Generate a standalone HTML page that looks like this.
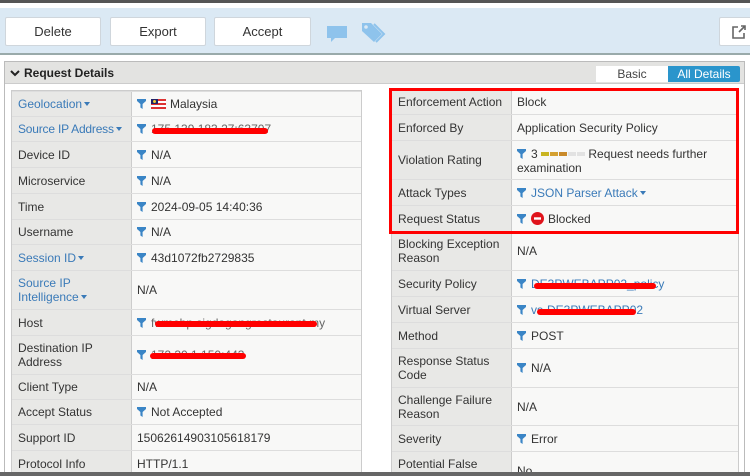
<!DOCTYPE html>
<html><head><style>
*{box-sizing:border-box;margin:0;padding:0}
html,body{width:750px;height:476px;overflow:hidden}
body{background:#fff;font-family:"Liberation Sans",sans-serif;font-size:12px;color:#333;position:relative}
.abs{position:absolute}
.btn{position:absolute;top:17px;height:29px;background:#fff;border:1px solid #cfd6dc;border-radius:2px;font-size:13px;color:#333;text-align:center;line-height:27px}
.r{position:absolute;border-bottom:1px solid #ddd;display:flex}
.l{background:#e8e8e6;border-right:1px solid #ccc;padding:0 6px;display:flex;align-items:center;line-height:14px;width:120px;white-space:nowrap}
.v{background:#f8f8f7;padding:0 5px;display:flex;align-items:center;line-height:14px;flex:1}
.lk{color:#3a7ab8}
.f{display:inline-block;width:9px;height:10px;margin-right:5px;vertical-align:-1px}
.red{position:absolute;height:6px;background:#f00;border-radius:3px}
.car{display:inline-block;width:0;height:0;border-left:3.5px solid transparent;border-right:3.5px solid transparent;border-top:4px solid #3a7ab8;margin-left:2px;vertical-align:2px}
</style></head><body>
<svg width="0" height="0" style="position:absolute"><defs><symbol id="fn" viewBox="0 0 9 10"><path d="M0 0H9V2L5.6 5V10L3.4 8.5V5L0 2Z" fill="#3a85c6"/></symbol></defs></svg>
<div class="abs" style="left:0;top:0;width:750px;height:3px;background:#555"></div>
<div class="abs" style="left:0;top:8px;width:750px;height:47px;background:#dbe9f4;border-bottom:2px solid #9aa"></div>
<div class="btn" style="left:5px;width:96px">Delete</div>
<div class="btn" style="left:110px;width:96px">Export</div>
<div class="btn" style="left:214px;width:97px">Accept</div>
<svg class="abs" style="left:326px;top:25px" width="22" height="18"><path d="M1 1H21V13H9L5 17V13H1Z" fill="#8ec3ec"/></svg>
<svg class="abs" style="left:360px;top:21px" width="26" height="22"><path d="M2 2H11L22 13L14 21L2 10Z" fill="#8ec3ec"/><circle cx="6" cy="6" r="1.8" fill="#dbe9f4"/><path d="M14 3L24 13L16 21" stroke="#8ec3ec" stroke-width="2" fill="none"/></svg>
<div class="btn" style="left:719px;top:17px;width:40px"></div>
<svg class="abs" style="left:731px;top:24px" width="16" height="16"><path d="M7 3H2V14H13V9" stroke="#666" stroke-width="1.6" fill="none"/><path d="M8 8L14 2M10 2H14V6" stroke="#666" stroke-width="1.6" fill="none"/></svg>
<div class="abs" style="left:4px;top:61px;width:741px;height:415px;border:1px solid #bbb;border-bottom:none;background:#fff"></div>
<div class="abs" style="left:5px;top:62px;width:739px;height:22px;background:#e3e3e1;border-bottom:1px solid #ccc"></div>
<svg class="abs" style="left:10px;top:70px" width="10" height="7"><path d="M1 1L5 5L9 1" stroke="#222" stroke-width="2" fill="none"/></svg>
<div class="abs" style="left:24px;top:66px;font-weight:bold;font-size:12px;color:#222">Request Details</div>
<div class="abs" style="left:596px;top:66px;width:72px;height:16px;background:#fff;text-align:center;line-height:16px;color:#444">Basic</div>
<div class="abs" style="left:668px;top:66px;width:72px;height:16px;background:#2a95cc;text-align:center;line-height:16px;color:#fff;border-radius:0 2px 2px 0">All Details</div>

<div class="abs" style="left:11px;top:90px;width:351px;height:386px;border:1px solid #ccc;background:#ddd"></div>
<div class="abs" style="left:391px;top:88px;width:348px;height:388px;border:1px solid #ccc;background:#ddd"></div>

<div class="r" style="left:12px;top:92px;width:349px;height:25px"><div class="l lk">Geolocation<span class="car"></span></div><div class="v"><svg class="f"><use href="#fn"/></svg><svg width="15" height="10" style="margin-right:4px"><rect width="15" height="10" fill="#d33"/><rect y="2" width="15" height="2" fill="#fff"/><rect y="6" width="15" height="2" fill="#fff"/><rect width="7" height="5" fill="#226"/><circle cx="3.5" cy="2.5" r="1.5" fill="#ec3"/></svg>Malaysia</div></div>
<div class="r" style="left:12px;top:117px;width:349px;height:25px"><div class="l lk" style="letter-spacing:-0.2px">Source IP Address<span class="car"></span></div><div class="v"><svg class="f"><use href="#fn"/></svg><span style="color:#666">175.139.183.27:63707</span></div></div>
<div class="red" style="left:152px;top:128px;width:116px"></div>
<div class="r" style="left:12px;top:142px;width:349px;height:26px"><div class="l">Device ID</div><div class="v"><svg class="f"><use href="#fn"/></svg>N/A</div></div>
<div class="r" style="left:12px;top:168px;width:349px;height:26px"><div class="l">Microservice</div><div class="v"><svg class="f"><use href="#fn"/></svg>N/A</div></div>
<div class="r" style="left:12px;top:194px;width:349px;height:26px"><div class="l">Time</div><div class="v"><svg class="f"><use href="#fn"/></svg>2024-09-05 14:40:36</div></div>
<div class="r" style="left:12px;top:220px;width:349px;height:25px"><div class="l">Username</div><div class="v"><svg class="f"><use href="#fn"/></svg>N/A</div></div>
<div class="r" style="left:12px;top:245px;width:349px;height:26px"><div class="l lk">Session ID<span class="car"></span></div><div class="v"><svg class="f"><use href="#fn"/></svg>43d1072fb2729835</div></div>
<div class="r" style="left:12px;top:271px;width:349px;height:39px"><div class="l lk" style="display:block;padding-top:5px">Source IP<br>Intelligence<span class="car"></span></div><div class="v">N/A</div></div>
<div class="r" style="left:12px;top:310px;width:349px;height:26px"><div class="l">Host</div><div class="v"><svg class="f"><use href="#fn"/></svg><span style="color:#666">fwmobp.sigdagangrestaurant.my</span></div></div>
<div class="red" style="left:155px;top:321px;width:162px"></div>
<div class="r" style="left:12px;top:336px;width:349px;height:39px"><div class="l" style="display:block;padding-top:5px">Destination IP<br>Address</div><div class="v"><svg class="f"><use href="#fn"/></svg><span style="color:#666">172.30.1.150:443</span></div></div>
<div class="red" style="left:150px;top:353px;width:96px"></div>
<div class="r" style="left:12px;top:375px;width:349px;height:25px"><div class="l">Client Type</div><div class="v">N/A</div></div>
<div class="r" style="left:12px;top:400px;width:349px;height:25px"><div class="l">Accept Status</div><div class="v"><svg class="f"><use href="#fn"/></svg>Not Accepted</div></div>
<div class="r" style="left:12px;top:425px;width:349px;height:26px"><div class="l">Support ID</div><div class="v">15062614903105618179</div></div>
<div class="r" style="left:12px;top:451px;width:349px;height:26px"><div class="l">Protocol Info</div><div class="v">HTTP/1.1</div></div>

<div class="r" style="left:392px;top:90px;width:346px;height:25px"><div class="l">Enforcement Action</div><div class="v">Block</div></div>
<div class="r" style="left:392px;top:115px;width:346px;height:26px"><div class="l">Enforced By</div><div class="v">Application Security Policy</div></div>
<div class="r" style="left:392px;top:141px;width:346px;height:39px"><div class="l">Violation Rating</div><div class="v" style="display:block;padding-top:6px"><svg class="f"><use href="#fn"/></svg>3 <span style="display:inline-block;width:8px;height:4px;background:#c9b522;vertical-align:2px"></span><span style="display:inline-block;width:8px;height:4px;background:#d4a030;margin-left:1px;vertical-align:2px"></span><span style="display:inline-block;width:8px;height:4px;background:#c98a2a;margin-left:1px;vertical-align:2px"></span><span style="display:inline-block;width:8px;height:4px;background:#e2e2e2;margin-left:1px;vertical-align:2px"></span><span style="display:inline-block;width:8px;height:4px;background:#e2e2e2;margin-left:1px;vertical-align:2px"></span> Request needs further<br>examination</div></div>
<div class="r" style="left:392px;top:180px;width:346px;height:26px"><div class="l">Attack Types</div><div class="v lk"><svg class="f"><use href="#fn"/></svg>JSON Parser Attack<span class="car"></span></div></div>
<div class="r" style="left:392px;top:206px;width:346px;height:26px"><div class="l">Request Status</div><div class="v"><svg class="f"><use href="#fn"/></svg><svg width="13" height="13" style="margin-right:4px"><circle cx="6.5" cy="6.5" r="6.5" fill="#e0141c"/><rect x="3" y="5.3" width="7" height="2.4" fill="#fff"/></svg>Blocked</div></div>
<div class="r" style="left:392px;top:232px;width:346px;height:39px"><div class="l" style="display:block;padding-top:5px">Blocking Exception<br>Reason</div><div class="v">N/A</div></div>
<div class="r" style="left:392px;top:271px;width:346px;height:26px"><div class="l">Security Policy</div><div class="v lk"><svg class="f"><use href="#fn"/></svg>DE3PWEBAPP02_policy</div></div>
<div class="red" style="left:534px;top:283px;width:122px"></div>
<div class="r" style="left:392px;top:297px;width:346px;height:26px"><div class="l">Virtual Server</div><div class="v lk"><svg class="f"><use href="#fn"/></svg>vs-DE3PWEBAPP02</div></div>
<div class="red" style="left:537px;top:309px;width:99px"></div>
<div class="r" style="left:392px;top:323px;width:346px;height:26px"><div class="l">Method</div><div class="v"><svg class="f"><use href="#fn"/></svg>POST</div></div>
<div class="r" style="left:392px;top:349px;width:346px;height:39px"><div class="l" style="display:block;padding-top:5px">Response Status<br>Code</div><div class="v"><svg class="f"><use href="#fn"/></svg>N/A</div></div>
<div class="r" style="left:392px;top:388px;width:346px;height:38px"><div class="l" style="display:block;padding-top:5px">Challenge Failure<br>Reason</div><div class="v">N/A</div></div>
<div class="r" style="left:392px;top:426px;width:346px;height:26px"><div class="l">Severity</div><div class="v"><svg class="f"><use href="#fn"/></svg>Error</div></div>
<div class="r" style="left:392px;top:452px;width:346px;height:24px"><div class="l" style="display:block;padding-top:5px">Potential False</div><div class="v" style="display:block;padding-top:12px">No</div></div>

<div class="abs" style="left:389px;top:88px;width:350px;height:146px;border:3px solid #f00"></div>
<div class="abs" style="left:0;top:472px;width:750px;height:4px;background:#666"></div>
</body></html>
